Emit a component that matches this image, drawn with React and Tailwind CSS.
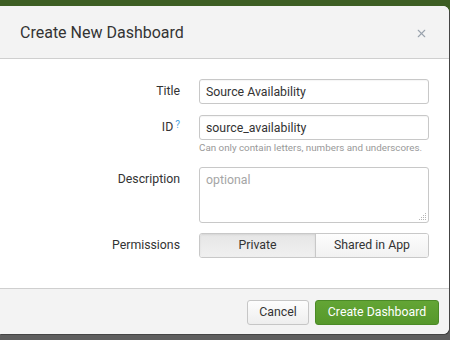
import { X } from 'lucide-react';

const labelCls = 'w-[180px] shrink-0 text-right text-[12.3px] text-[#333] leading-[25px]';
const inputCls =
  'w-[230px] h-[25px] rounded-[3px] border border-[#c8c8c8] bg-white px-[6px] text-[12.3px] text-[#333] outline-none shadow-[inset_0_1px_1px_rgba(0,0,0,0.04)]';

const App = () => {
  return (
    <div
      className="w-[450px] h-[340px] overflow-hidden bg-[linear-gradient(#3d5e23_0_22px,#5e5e5e_22px)]"
      style={{ fontFamily: 'Roboto, "Liberation Sans", sans-serif' }}
    >
      <div className="mt-[6px] w-[449px] h-[328px] bg-white rounded-r-[6px] flex flex-col overflow-hidden shadow-[1px_1px_0_#444]">
        {/* Header */}
        <div className="h-[53px] shrink-0 bg-[#f3f3f3] border-b border-[#cfcfcf] flex items-center justify-between pl-5 pr-[21px]">
          <h3 className="text-[16px] text-[#333] pt-[1px]">Create New Dashboard</h3>
          <X className="w-[13px] h-[13px] text-[#9aa3ad] mt-[3px]" strokeWidth={2} />
        </div>

        {/* Body */}
        <div className="flex-1 pt-5">
          <div className="flex items-start gap-[19px]">
            <label className={labelCls}>Title</label>
            <input className={inputCls} defaultValue="Source Availability" />
          </div>

          <div className="flex items-start gap-[19px] mt-[11px]">
            <label className={labelCls}>
              ID<sup className="text-[10px] text-[#4aa3df] ml-[2px] relative top-[-3px]">?</sup>
            </label>
            <div className="flex flex-col">
              <input className={inputCls} defaultValue="source_availability" />
              <span className="text-[9.8px] text-[#999] mt-[1px] leading-[14px]">
                Can only contain letters, numbers and underscores.
              </span>
            </div>
          </div>

          <div className="flex items-start gap-[19px] mt-[12px]">
            <label className={labelCls}>Description</label>
            <div className="relative">
              <textarea
                className="block w-[230px] h-[56px] resize-none rounded-[3px] border border-[#c8c8c8] bg-white px-[6px] py-[3px] text-[12.3px] text-[#333] outline-none placeholder:text-[#a5a5a5]"
                placeholder="optional"
              />
              <svg className="absolute right-[2px] bottom-[2px] w-[8px] h-[8px]" viewBox="0 0 8 8" fill="#b5b5b5">
                <rect x="6" y="0" width="1" height="1" />
                <rect x="4" y="2" width="1" height="1" />
                <rect x="6" y="2" width="1" height="1" />
                <rect x="2" y="4" width="1" height="1" />
                <rect x="4" y="4" width="1" height="1" />
                <rect x="6" y="4" width="1" height="1" />
                <rect x="0" y="6" width="1" height="1" />
                <rect x="2" y="6" width="1" height="1" />
                <rect x="4" y="6" width="1" height="1" />
                <rect x="6" y="6" width="1" height="1" />
              </svg>
            </div>
          </div>

          <div className="flex items-start gap-[19px] mt-[10px]">
            <label className={labelCls}>Permissions</label>
            <div className="w-[230px] h-[25px] flex rounded-[3px] border border-[#c8c8c8] overflow-hidden text-[12.3px] text-[#333]">
              <button className="w-[116px] bg-[linear-gradient(#e6e6e6,#f0f0f0)] shadow-[inset_0_1px_2px_rgba(0,0,0,0.08)] border-r border-[#c8c8c8]">
                Private
              </button>
              <button className="flex-1 bg-[linear-gradient(#fdfdfd,#f1f1f1)]">Shared in App</button>
            </div>
          </div>
        </div>

        {/* Footer */}
        <div className="h-[46px] shrink-0 bg-[#f3f3f3] border-t border-[#cfcfcf] flex items-start justify-end gap-[6px] pt-[11px] pr-[10px]">
          <button className="w-[62px] h-[25px] rounded-[3px] border border-[#c6c6c6] bg-[linear-gradient(#fdfdfd,#eeeeee)] text-[12.3px] text-[#333]">
            Cancel
          </button>
          <button className="w-[124px] h-[25px] rounded-[3px] border border-[#4b8a26] bg-[linear-gradient(#63a535,#56982b)] text-[12.3px] text-white">
            Create Dashboard
          </button>
        </div>
      </div>
    </div>
  );
};

export default App;
